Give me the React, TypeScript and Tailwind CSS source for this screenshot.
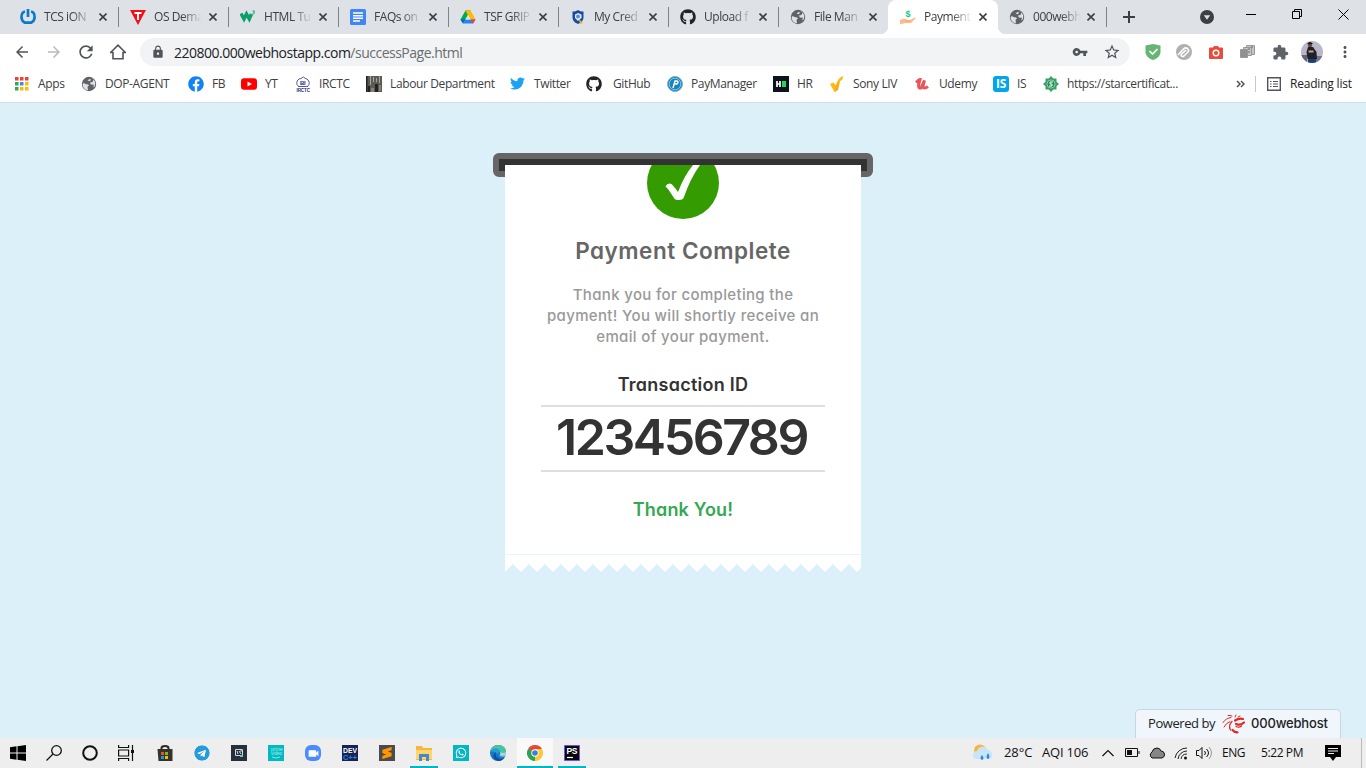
import React from "react";
import {
  MdArrowBack, MdArrowForward, MdRefresh, MdLock, MdVpnKey, MdStarBorder,
  MdExtension, MdMoreVert, MdListAlt, MdVideocam,
} from "react-icons/md";
import { FaGithub, FaFacebook, FaTwitter, FaTelegram, FaWhatsapp } from "react-icons/fa";
import { SiSublimetext } from "react-icons/si";

type Item = { icon: React.ReactNode; text: string; w?: string };

const Power = () => (
  <svg viewBox="0 0 16 16" className="size-4" fill="none" stroke="#0b7bc9" strokeWidth="2.700">
    <path d="M5 2.500C2.500 3 1.500 5.500 1.500 8a6 6 0 0 0 3.500 5.700h6A6 6 0 0 0 14.600 8c0-2.500-1-5-3.500-5.500M8 0v8" />
  </svg>
);
const Toppr = () => (
  <svg viewBox="0 0 16 16" className="size-4">
    <path d="M0 1h16L8 16z" fill="#f80d12" />
    <path d="M4.500 3h7v2H9v6H7V5H4.500z" fill="#fff" />
  </svg>
);
const W3 = () => (
  <svg viewBox="0 0 16 16" className="size-4" fill="none" stroke="#0b9f69">
    <path d="M1 4.500l3 5.500L6.500 5l2.800 5L11.500 5" strokeWidth="3.400" />
    <path d="M12.500 2h2l-1 1.300c1.800.2 1 2.200-1 1.400" strokeWidth=".9" />
  </svg>
);
const Docs = () => (
  <svg viewBox="0 0 16 16" className="size-4">
    <rect width="16" height="16" rx="1.500" fill="#4285f4" />
    <path d="M3 4h10M3 6.700h10M3 9.300h10M3 12h7" stroke="#fff" strokeWidth="1.400" />
  </svg>
);
const Drive = () => (
  <svg viewBox="0 0 16 16" className="size-4">
    <path d="M5.500 1.500h5L8 6z" fill="#188038" />
    <path d="M5.500 1.500L8 6l-5 8.500L.5 10.500z" fill="#00ac47" />
    <path d="M5.500 1.500h5l5 9h-5z" fill="#ffba00" />
    <path d="M.5 10.500h5l-2.500 4z" fill="#0066da" />
    <path d="M5.500 10.500h10l-2.500 4H3z" fill="#2684fc" />
    <path d="M10.500 10.500h5l-2.500 4z" fill="#ea4335" />
    <path d="M8 6l2.600 4.500H5.400z" fill="#dee1e6" />
  </svg>
);
const Shield = () => (
  <svg viewBox="0 0 16 16" className="size-4">
    <path d="M8 1q3 2 5.500 1.500V8c0 4-3 6-5.500 7-2.500-1-5.500-3-5.500-7V2.500Q5 3 8 1z" fill="#174ca0" />
    <path d="M5 5.500l3-1.500 3.500 1.500V9L8 12 5 9z" fill="#e5edf8" />
    <circle cx="8" cy="7.500" r="2" fill="#5b8fd0" />
    <path d="M9 10l4 4-3 1z" fill="#f1b426" />
  </svg>
);
const Globe = () => (
  <svg viewBox="0 0 16 16" className="size-4">
    <circle cx="8" cy="8" r="7.200" fill="#5f6368" />
    <path d="M2 7.500q1.500-.5 3 .8 2-.6 3 1.200l-1.500 1.300.5 3.400q-4.800-.7-5.400-5.500zM9.500 1.600q1.800.5 3 1.900L11.500 6 9 6.600l.8 1.800 3.200.4-.8 2.700 1.600-1.200Q14.500 8 14 5.700l-1.500-2.200zM6.500 4.500l2-1.500 1.500.5-1 1.800z" fill="#dfe1e5" />
  </svg>
);
const Octo = () => <FaGithub className="size-4 text-[#202328]" />;
const PayHand = () => (
  <svg viewBox="0 0 16 16" className="size-4">
    <text x="5.500" y="7.500" fontSize="9" fontWeight="700" fontFamily="Liberation Sans" fill="#15c58d">$</text>
    <path d="M0 11l4-1.500 4 1.500h2l5-2.500c1 0 1 1 0 1.500L11 14H5l-5 1.500z" fill="#ffb98a" />
    <path d="M5 12h5" stroke="#f99d72" strokeWidth=".7" />
  </svg>
);

const tabs: Item[] = [
  { icon: <Power />, text: "TCS iON" },
  { icon: <Toppr />, text: "OS Dema" },
  { icon: <W3 />, text: "HTML Tu" },
  { icon: <Docs />, text: "FAQs on" },
  { icon: <Drive />, text: "TSF GRIP" },
  { icon: <Shield />, text: "My Cred" },
  { icon: <Octo />, text: "Upload f" },
  { icon: <Globe />, text: "File Man" },
  { icon: <PayHand />, text: "Payment" },
  { icon: <Globe />, text: "000webh" },
];

const Cross = () => (
  <svg viewBox="0 0 8 8" className="size-2" stroke="#3c4043" strokeWidth="1.600">
    <path d="M.5.5l7 7M7.500.5l-7 7" />
  </svg>
);

function TabStrip() {
  return (
    <div className="flex h-[34px] bg-[#dee1e6] pl-2">
      {tabs.map((t, i) => (
        <div
          key={i}
          className={
            "relative flex h-full w-[110px] shrink-0 items-center " +
            (i === 8 ? "rounded-t-lg bg-white pl-3" : i === 9 ? "pl-[11px]" : "pl-3")
          }
        >
          <span className="flex w-6 shrink-0">{t.icon}</span>
          <span className="w-[48px] shrink-0 text-[12px] tracking-[-0.45px] whitespace-nowrap text-[#3c4043] [mask-image:linear-gradient(to_right,#000_28px,transparent_48px)]">
            {t.text}
          </span>
          <span className={i === 9 ? "ml-[6px]" : "ml-[7px]"}><Cross /></span>
          {i !== 7 && i !== 8 && (
            <i className={"absolute top-[7px] h-5 w-px bg-[#808387] " + (i === 9 ? "right-[1px]" : "right-[-1px]")} />
          )}
          {i === 8 && (
            <>
              <i className="absolute bottom-0 -left-2 size-2 bg-[radial-gradient(circle_at_0_0,#dee1e6_8px,white_8.500px)]" />
              <i className="absolute -right-2 bottom-0 size-2 bg-[radial-gradient(circle_at_100%_0,#dee1e6_8px,white_8.500px)]" />
            </>
          )}
        </div>
      ))}
      <svg viewBox="0 0 12 12" className="mt-[11px] ml-[15px] size-3" stroke="#3c4043" strokeWidth="2">
        <path d="M6 0v12M0 6h12" />
      </svg>
      <svg viewBox="0 0 14 14" className="mt-[10px] ml-[65px] size-[14px]">
        <circle cx="7" cy="7" r="7" fill="#3c4043" />
        <path d="M3.800 5.300h6.400L7 9.800z" fill="#dee1e6" />
      </svg>
      <svg viewBox="0 0 104 12" className="mt-[8px] ml-[32px] h-3 w-[104px]" fill="none" stroke="#000">
        <path d="M0 6.500h10M46.500 3.500h7v7h-7zM48.500 3.500v-2h7v7h-2M92.500 1.500l10 10M102.500 1.500l-10 10" />
      </svg>
    </div>
  );
}

const Avatar = () => (
  <svg viewBox="0 0 22 22" className="size-[22px]">
    <defs><clipPath id="av"><circle cx="11" cy="11" r="11" /></clipPath></defs>
    <g clipPath="url(#av)">
      <path fill="#b9b7ca" d="M0 0h22v22H0z" />
      <path fill="#696277" d="M0 14h6v8H0z" />
      <path fill="#76708a" d="M16 15h6v7h-6z" />
      <circle cx="9" cy="4" r="2.200" fill="#60463e" />
      <path d="M6 3q3-4 6 0z" fill="#17151a" />
      <path d="M7 6h5l3.500 5 .5 7H6.500l-1-7z" fill="#202127" />
      <path d="M7.500 10.500h5" stroke="#c2a97d" strokeWidth="1.800" />
      <path d="M7 18h8.500v4H7z" fill="#1b3e78" />
    </g>
  </svg>
);

function Toolbar() {
  return (
    <div className="flex h-9 items-center bg-white pl-[13px]">
      <MdArrowBack className="size-[18px] text-[#505458]" />
      <MdArrowForward className="ml-[14px] size-[18px] text-[#b8babd]" />
      <MdRefresh className="ml-[13px] size-5 text-[#505458]" />
      <svg viewBox="0 0 16 16" className="ml-[14px] size-4" fill="none" stroke="#505458" strokeWidth="1.600">
        <path d="M0 8.500h3v6.300h10V8.500h3M.6 8.500L8 1.200l7.400 7.300" />
      </svg>
      <div className="ml-[14px] flex h-7 w-[990px] items-center rounded-full bg-[#f1f3f4] pl-[11px]">
        <MdLock className="size-[14px] text-[#505458]" />
        <span className="ml-[9px] text-[14px] tracking-[-0.5px] whitespace-nowrap text-[#202124]">
          220800.000webhostapp.com<span className="text-[#696d71]">/successPage.html</span>
        </span>
        <MdVpnKey className="ml-auto size-4 text-[#505458]" />
        <MdStarBorder className="mr-[9px] ml-[15px] size-[18px] text-[#505458]" />
      </div>
      <svg viewBox="0 0 16 16" className="ml-[15px] size-4">
        <path d="M8 0l7.500 1.500V8c0 4-4 7-7.500 8C4.500 15 .5 12 .5 8V1.500z" fill="#66b574" />
        <path d="M4.500 7l3 3 5-5" fill="none" stroke="#fff" strokeWidth="1.700" />
      </svg>
      <svg viewBox="0 0 16 16" className="ml-[15px] size-4">
        <circle cx="8" cy="8" r="8" fill="#b0b0b0" />
        <path d="M2 11l5.500-6q2-2 4-.5 2 1.800.2 3.800L8 12q-1.500 1-2.500 0t.3-2.200L10 6" fill="none" stroke="#fff" strokeWidth="1.600" />
      </svg>
      <svg viewBox="0 0 14 13" className="ml-[17px] h-[13px] w-[14px]">
        <path d="M4 1.500L5 0h4l1 1.500h3q1 0 1 1V12q0 1-1 1H1q-1 0-1-1V2.500q0-1 1-1z" fill="#e94b3c" />
        <circle cx="7" cy="7" r="2.800" fill="none" stroke="#fff" strokeWidth="1.400" />
      </svg>
      <svg viewBox="0 0 15 16" className="ml-[17px] h-4 w-[15px]" stroke="#989898" fill="#c5c5c5">
        <path d="M6.500 1.500h8v9h-8z" /><path d="M3.500 3.500h8v8h-8z" /><path d="M.5 5.500h7v8h-7z" fill="#909090" />
        <path d="M8 5h2M8 8h2M11 3h2" stroke="#666" />
      </svg>
      <MdExtension className="ml-[17px] size-[17px] text-[#5f6368]" />
      <span className="ml-[12px]"><Avatar /></span>
      <MdMoreVert className="ml-[13px] size-[18px] text-[#505458]" />
    </div>
  );
}

const AppsGrid = () => (
  <svg viewBox="0 0 14 14" className="ml-px size-[14px]">
    {["#ea4335", "#ea4335", "#ea4335", "#34a853", "#4285f4", "#fbbc04", "#34a853", "#fbbc04", "#fbbc04"].map((c, i) => (
      <rect key={i} x={(i % 3) * 5} y={Math.floor(i / 3) * 5} width="3.500" height="3.500" fill={c} />
    ))}
  </svg>
);

const bookmarks: Item[] = [
  { icon: <AppsGrid />, text: "Apps", w: "w-[67px]" },
  { icon: <Globe />, text: "DOP-AGENT", w: "w-[107px]" },
  { icon: <FaFacebook className="size-4 text-[#1184f5]" />, text: "FB", w: "w-[53px]" },
  {
    icon: <svg viewBox="0 0 16 12" className="h-3 w-4"><rect width="16" height="11.500" y=".3" rx="3" fill="#f00" /><path d="M6.500 3.500L11 6 6.500 8.500z" fill="#fff" /></svg>,
    text: "YT", w: "w-[54px]",
  },
  {
    icon: (
      <svg viewBox="0 0 16 16" className="size-4">
        <path d="M3.500 10.500A6 5 0 0 1 5 2.500M11 2.500a6 5 0 0 1 1.500 8M5 3l3.500-2 2.500 2M3 10.500h10" fill="none" stroke="#5557a0" />
        <text x="5" y="9" fontSize="6" fontWeight="700" fontFamily="Liberation Sans" fill="#25277e">BI</text>
        <text x="1.500" y="15.500" fontSize="4.500" fontWeight="700" fontFamily="Liberation Sans" fill="#25277e" textLength="13">IRCTC</text>
      </svg>
    ),
    text: "IRCTC", w: "w-[71px]",
  },
  {
    icon: (
      <svg viewBox="0 0 16 16" className="size-4">
        <path fill="#5c5a54" d="M0 0h16v16H0z" /><path fill="#23221f" d="M0 0h1.500v16H0zM9 8h3v8H9zM2 10h2v6H2z" />
        <path stroke="#a9a49a" d="M4.500 0v9M7.500 1v5M13.500 0v7M10.500 2v4" /><path fill="#88837a" d="M5 12h3v4H5zM13 9h2v6h-2z" />
      </svg>
    ),
    text: "Labour Department", w: "w-[144px]",
  },
  { icon: <FaTwitter className="size-[15px] text-[#1da1f2]" />, text: "Twitter", w: "w-[76px]" },
  { icon: <Octo />, text: "GitHub", w: "w-[81px] [&>span:first-child]:w-[27px]" },
  {
    icon: (
      <svg viewBox="0 0 16 16" className="size-4">
        <circle cx="8" cy="8" r="7.500" fill="#1785bc" stroke="#73aeca" /><circle cx="8" cy="8" r="5.800" fill="none" stroke="#b1dbed" strokeWidth=".7" />
        <path d="M6 12l2-7h2q2 1 0 3H7.500" fill="none" stroke="#fff" strokeWidth="1.400" />
      </svg>
    ),
    text: "PayManager", w: "w-[106px]",
  },
  {
    icon: <svg viewBox="0 0 16 16" className="size-4"><path fill="#0e141e" d="M0 0h16v16H0z" /><path d="M4 5v6M7 5v6M4 8h3" stroke="#fff" strokeWidth="1.700" /><path fill="#1bdb5d" d="M9 5h4v6H9z" /></svg>,
    text: "HR", w: "w-[56px]",
  },
  {
    icon: <svg viewBox="0 0 16 16" className="size-4"><path d="M1 8l3.500-1.500L7 9.500Q8 2 14.500 0L13 4l-2 1-2 9-3.500 2z" fill="#fdb913" /><path d="M7 10l4-5-2 9-3.500 2z" fill="#f6930c" opacity=".4" /></svg>,
    text: "Sony LIV", w: "w-[86px]",
  },
  {
    icon: <svg viewBox="0 0 16 16" className="size-4" fill="none" stroke="#e9555a" strokeWidth="3"><path d="M1 6.500q3-3 4-3L3.500 9.500q0 3 2.500 2.500l3.500-7.500-1.500 6q1 3 5 0" /></svg>,
    text: "Udemy", w: "w-[78px]",
  },
  {
    icon: <span className="flex size-4 items-center justify-center rounded-[3px] bg-[#00a5ec] text-[12px] font-bold tracking-[-0.3px] text-white">IS</span>,
    text: "IS", w: "w-[50px]",
  },
  {
    icon: (
      <svg viewBox="0 0 16 16" className="size-4">
        <path d="M8 0l2.300 2.500h3.200v3.200L16 8l-2.500 2.300v3.200h-3.200L8 16l-2.300-2.500H2.500v-3.200L0 8l2.500-2.300V2.500h3.200z" fill="#37a263" />
        <circle cx="8" cy="8" r="4" fill="#208954" stroke="#bfe0c8" strokeWidth=".7" /><path d="M10 6H7v2h2v2H6" fill="none" stroke="#fff" />
      </svg>
    ),
    text: "https://starcertificat...", w: "w-[193px]",
  },
];

function Bookmarks() {
  return (
    <div className="flex h-[33px] items-center border-b border-[#d5dce2] bg-white pb-[5px] pl-[14px] text-[12px] tracking-[-0.38px] whitespace-nowrap text-[#3c4043]">
      {bookmarks.map((b) => (
        <div key={b.text} className={"flex shrink-0 items-center " + b.w}>
          <span className="flex w-6 shrink-0">{b.icon}</span>
          <span>{b.text}</span>
        </div>
      ))}
      <svg viewBox="0 0 9 8" className="h-2 w-[9px]" fill="none" stroke="#505458" strokeWidth="1.500"><path d="M1 1l3 3-3 3M5 1l3 3-3 3" /></svg>
      <i className="ml-[10px] h-4 w-px bg-[#c5c8cc]" />
      <svg viewBox="0 0 14 14" className="ml-[11px] size-[14px]" fill="none" stroke="#505458">
        <path d="M.7.7h12.600v12.600H.7z" strokeWidth="1.400" />
        <path d="M3 4.500h1.500M6 4.500h5M3 7h1.500M6 7h5M3 9.500h1.500M6 9.500h5" strokeWidth="1.200" />
      </svg>
      <span className="ml-[9px] tracking-[-0.2px] text-[#202124]">Reading list</span>
    </div>
  );
}

function Receipt() {
  return (
    <div className="flex w-[380px] flex-col items-center">
      <div className="h-6 w-full rounded-[6px] border-[6px] border-[#666] bg-[#333]" />
      <div className="relative -mt-3 flex h-[399px] w-[356px] flex-col items-center bg-white font-[Inter,sans-serif] [font-feature-settings:'cv11']">
        <svg viewBox="0 0 72 54" className="h-[54px] w-[72px] shrink-0">
          <circle cx="36" cy="18" r="36" fill="#349c00" />
          <path d="M18.500 21.500q2-4 6-2.500 4 4 6.500 8Q37 11 46 0h7Q43 14 37 32q-.8 3-5 3t-5-2l-6-9z" fill="#fff" />
        </svg>
        <h1 className="mt-[16px] text-[22.5px] leading-[32px] font-semibold tracking-[0.52px] whitespace-nowrap text-[#666]">Payment Complete</h1>
        <p className="mt-[17px] text-center text-[15px] leading-[21px] font-medium tracking-[0.34px] whitespace-nowrap text-[#999]">
          Thank you for completing the<br />payment! You will shortly receive an<br />email of your payment.
        </p>
        <h2 className="mt-[24px] text-[18px] leading-[27px] font-semibold tracking-[0.25px] text-[#333]">Transaction ID</h2>
        <div className="mt-[7px] flex h-[67px] w-[284px] items-center justify-center border-y-2 border-[#dfdfdf] pr-[3px] pb-[3px] text-[50px] leading-none font-semibold tracking-[-2.450px] text-[#333]">
          123456789
        </div>
        <h3 className="mt-6 text-[18px] leading-[27px] font-semibold tracking-[0.18px] text-[#34a853]">Thank You!</h3>
        <i className="mt-[31px] h-px w-full bg-[#e9f5fb]" />
      </div>
      <svg viewBox="0 0 356 8" className="h-2 w-[356px]">
        <defs><pattern id="teeth" width="16" height="8" patternUnits="userSpaceOnUse"><path d="M0 0h16v8L8 0 0 8z" fill="#fff" /></pattern></defs>
        <path d="M0 0h356v8H0z" fill="url(#teeth)" />
      </svg>
    </div>
  );
}

const Swirl = () => (
  <svg viewBox="0 0 24 20" className="h-5 w-6" fill="none" stroke="#dc2a22" strokeLinecap="round">
    <path d="M13 6.500q4-2.500 8-1.500M14 10q4 2 8-1.500M10.500 16q2 2.500 5 2.300" strokeWidth="2.200" />
    <path d="M9 3.500q-5 .5-8 5M8 7.500q-4 1.500-6 5.500M10 2q-2-1-4-.5M13 3l1-2M16 3l2-1" strokeWidth="1" />
    <path d="M10 7.500q-4 4-1.500 8.500M14 12.500q3 1.500 5.500-.5" strokeWidth="1.300" />
  </svg>
);

function Badge() {
  return (
    <div className="absolute right-[25px] bottom-0 flex h-[29px] w-[206px] items-center rounded-t-[5px] border border-b-0 border-[#c7d7df] bg-[#f0f6fc] pl-[12px] text-[#222]">
      <span className="w-[74px] text-[13px] tracking-[-0.43px] whitespace-nowrap">Powered by</span>
      <Swirl />
      <span className="ml-[5px] font-[Inter,sans-serif] text-[13px] font-medium tracking-[-0.18px]">000webhost</span>
    </div>
  );
}

const Explorer = () => (
  <svg viewBox="0 0 16 16" className="size-4">
    <path d="M0 1h6l1 2h9v12H0z" fill="#f5b83d" /><path d="M0 5h16v9H0z" fill="#ffd66d" />
    <path d="M3 9h10v7h-3v-4H6v4H3z" fill="#3e8bd0" />
  </svg>
);
const Edge = () => (
  <svg viewBox="0 0 16 16" className="size-4">
    <circle cx="8" cy="8" r="8" fill="#1679ca" /><path d="M.5 6C2 1 6 0 8 0q8 0 8 7-1 4-6 3 1-1 0-3-4-5-9.500-1z" fill="#48c4a0" />
    <path d="M.5 6q5-5 9.500-.5L8 9Q5 7 .5 6z" fill="#239fd6" /><path d="M6 7q-2 6 5 7 2 0 4-2-4 6-9.500 3Q1 10 6 7z" fill="#124f98" />
    <path d="M10 7q1 3-1 3 2 3 7 1v-4q-2 2-6 0z" fill="#eee" opacity=".6" />
  </svg>
);
const Chrome = () => (
  <svg viewBox="0 0 16 16" className="size-4">
    <path d="M8 8L1.070 4A8 8 0 0 1 14.930 4z" fill="#e4473b" /><path d="M8 8l6.930-4A8 8 0 0 1 8 16z" fill="#fcc934" />
    <path d="M8 8v8A8 8 0 0 1 1.070 4z" fill="#2aa44f" /><path d="M8 4h6.930L11.500 10z" fill="#fcc934" />
    <path d="M8 16l3.500-6L8 8z" fill="#fcc934" /><path d="M1.070 4L4.500 10 8 8z" fill="#2aa44f" />
    <circle cx="8" cy="8" r="3.700" fill="#fff" /><circle cx="8" cy="8" r="2.800" fill="#3e7edb" />
  </svg>
);

const pinned: React.ReactNode[] = [
  <svg viewBox="0 0 16 16" className="size-4">
    <path d="M3.500 3q0-3 4.500-3t4.500 3v2h-2V3Q8 1 5.500 3v2h-2z" fill="#2d2b28" /><path d="M.5 4h15v12H1.500z" fill="#35322e" />
    <path d="M4 7h3v3H4z" fill="#f25022" /><path d="M8 7h3v3H8z" fill="#7fba00" /><path d="M4 11h3v3H4z" fill="#00a4ef" /><path d="M8 11h3v3H8z" fill="#ffb900" />
  </svg>,
  <FaTelegram className="size-4 rounded-full bg-white text-[#269bd7]" />,
  <svg viewBox="0 0 16 16" className="size-4"><path fill="#292e3d" d="M0 0h16v16H0z" /><path d="M4.500 4.500h7v6h-7zM6 6l1 3M8 6l2 3M9 6h2" fill="none" stroke="#d4d6dc" /><path d="M9 10h3v2H9z" fill="#62cbc0" /></svg>,
  <svg viewBox="0 0 16 16" className="size-4">
    <path fill="#00b9c2" d="M0 0h16v16H0z" />
    <g fill="#a9f0ef" fontSize="4.700" fontFamily="Liberation Sans"><text x="3" y="6">prime</text><text x="3" y="10">video</text></g>
    <path d="M4 12q4 2 8 0" fill="none" stroke="#a9f0ef" strokeWidth=".8" />
  </svg>,
  <span className="flex size-4 items-center justify-center rounded-[6px] bg-[#4a8cff]"><MdVideocam className="size-[13px] text-white" /></span>,
  <svg viewBox="0 0 16 16" className="size-4">
    <path fill="#152455" d="M0 0h16v16H0z" />
    <g fontFamily="Liberation Sans" fontWeight="700" fontSize="7.500"><text x="1" y="7.500" fill="#fff" textLength="14" lengthAdjust="spacingAndGlyphs">DEV</text><text x="1" y="14.800" fill="#2a83e2" textLength="14" lengthAdjust="spacingAndGlyphs">C++</text></g>
  </svg>,
  <span className="flex size-4 items-center justify-center bg-[#4b4b4b]"><SiSublimetext className="size-3 text-[#ff9800]" /></span>,
  <Explorer />,
  <span className="flex size-4 items-center justify-center bg-[#00b7c3]"><FaWhatsapp className="size-3 text-white" /></span>,
  <Edge />,
  <Chrome />,
  <svg viewBox="0 0 16 16" className="size-4"><path fill="#080808" stroke="#7153e8" d="M.5.5h15v15H.5z" /><text x="2.500" y="9" fontSize="8.500" fontFamily="Liberation Sans" fontWeight="700" fill="#fff" textLength="11">PS</text><path d="M3 12.500h6" stroke="#fff" strokeWidth="1.200" /></svg>,
];

function Taskbar() {
  return (
    <div className="flex h-[30px] items-center bg-[#eee] text-[12px] whitespace-nowrap text-[#111]">
      <div className="flex w-[147px] gap-[20px] pl-[10px]">
        <svg viewBox="0 0 16 16" className="size-4"><path d="M0 2.300l6.500-1V7.500H0zM7.500 1.200L16 0v7.500H7.500zM0 8.500h6.500v6.200L0 13.700zM7.500 8.500H16V16l-8.500-1.200z" /></svg>
        <svg viewBox="0 0 16 16" className="size-4" fill="none" stroke="#111" strokeWidth="1.300"><circle cx="10.500" cy="5.500" r="4.800" /><path d="M7 9L.5 15.500" /></svg>
        <svg viewBox="0 0 16 16" className="size-4" fill="none" stroke="#111" strokeWidth="2"><circle cx="8" cy="8" r="6.800" /></svg>
        <svg viewBox="0 0 16 16" className="size-4" fill="none" stroke="#111" strokeWidth="1.200"><path d="M.6 0v2.500h10V0M.6 16v-2.500h10V16M.6 5h10v6H.6zM14.500 0v16" /><path d="M13 5h3v3h-3z" fill="#111" stroke="none" /></svg>
      </div>
      {pinned.map((p, i) => (
        <div key={i} className="relative flex h-full w-[37px] items-center pl-[10px]">
          {i === 10 && <i className="absolute inset-y-0 left-0 w-9 bg-[#f9f9f9]" />}
          <span className="relative">{p}</span>
          {i === 10 && <i className="absolute bottom-0 left-0 h-[2px] w-9 bg-[#00b7c3]" />}
          {(i === 7 || i === 11) && <i className="absolute bottom-0 left-[4px] h-[2px] w-7 bg-[#00b7c3]" />}
        </div>
      ))}
      <div className="ml-auto flex h-full w-[393px] items-center">
        <svg viewBox="0 0 22 18" className="h-[18px] w-[22px]">
          <circle cx="7" cy="6.500" r="6" fill="#f8b43c" /><path d="M4 15a4 4 0 0 1 0-8 6 6 0 0 1 11-1 5 5 0 0 1 2 9z" fill="#c9e4f7" />
          <path d="M9 11q-3 4 0 5 3-1 0-5zM15 9q-3 5 0 6 3-1 0-6z" fill="#2989df" />
        </svg>
        <span className="ml-[9px] w-[38px] text-[13px] tracking-[-0.1px]">28°C</span>
        <span className="w-[60px] text-[13px] tracking-[-0.2px]">AQI 106</span>
        <svg viewBox="0 0 12 8" className="h-2 w-3" fill="none" stroke="#111" strokeWidth="1.200"><path d="M.5 7L6 1.500 11.500 7" /></svg>
        <svg viewBox="0 0 16 10" className="ml-[11px] h-[10px] w-4" fill="none" stroke="#111"><path d="M.5.5h12v8H.5zM14 3v3" /><path d="M2 2h5v5H2z" fill="#111" stroke="none" /></svg>
        <svg viewBox="0 0 17 12" className="ml-[7px] h-3 w-[17px]"><path d="M4 11a3.500 3.500 0 0 1 0-6q1-4 5-4 3 0 4 3 3 0 3.500 3T14 11z" fill="#858585" stroke="#111" /></svg>
        <svg viewBox="0 0 14 14" className="ml-[9px] size-[14px]" fill="none" stroke="#222"><path d="M1 12A12 12 0 0 1 13 2M4 13A9 9 0 0 1 13 5M7 13a6 6 0 0 1 6-5" /><circle cx="11.500" cy="12" r="1.500" fill="#111" stroke="none" /></svg>
        <svg viewBox="0 0 17 14" className="ml-[8px] h-[14px] w-[17px]" fill="none" stroke="#111"><path d="M.5 4.500H3l3-3v11l-3-3H.5zM8.500 5q2 2 0 4M10.500 3q4 4 0 8" /><path d="M13 1q5 6 0 12" stroke="#999" /></svg>
        <span className="ml-[9px] w-[39px] tracking-[-0.5px]">ENG</span>
        <span className="w-[64px] tracking-[-0.4px]">5:22 PM</span>
        <svg viewBox="0 0 16 16" className="size-4"><path d="M0 0h16v12h-5l-3 4-3-4H0z" /><path d="M3 3.500h10M3 6h10M3 8.500h6" stroke="#eee" /></svg>
        <i className="ml-auto mr-1 h-full w-px bg-[#bbb]" />
      </div>
    </div>
  );
}

export default function App() {
  return (
    <div className="flex h-[768px] w-[1366px] flex-col overflow-hidden font-['Open_Sans','Noto_Sans',sans-serif]">
      <TabStrip />
      <Toolbar />
      <Bookmarks />
      <main className="relative flex min-h-0 flex-1 justify-center bg-[#dcf0f9] pt-[50px]">
        <Receipt />
        <Badge />
      </main>
      <Taskbar />
    </div>
  );
}
